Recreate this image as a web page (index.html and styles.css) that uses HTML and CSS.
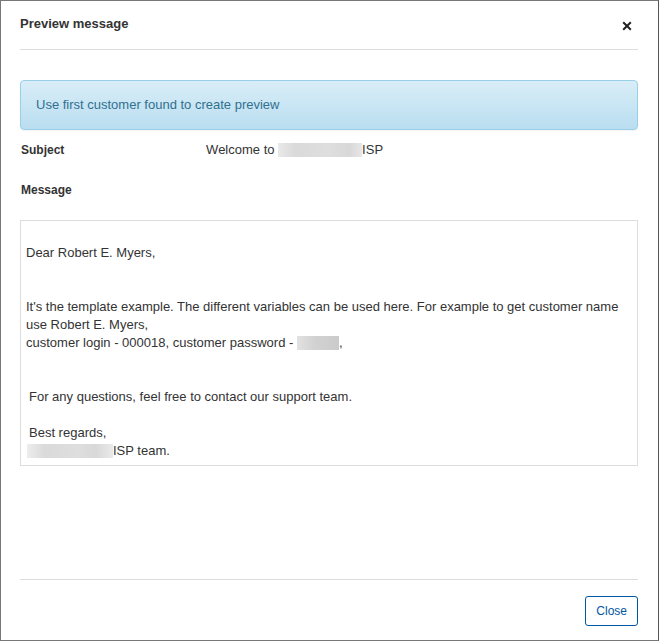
FILE: index.html
```html
<!DOCTYPE html>
<html lang="en">
<head>
  <meta charset="utf-8">
  <meta name="viewport" content="width=device-width, initial-scale=1">
  <title>Preview message</title>
  <link rel="stylesheet" href="styles.css">
</head>
<body>
  <section class="dialog" role="dialog" aria-labelledby="dialog-title">
    <header class="dialog-header">
      <h1 class="dialog-title" id="dialog-title">Preview message</h1>
      <button class="dismiss" type="button" aria-label="Dismiss">
        <svg class="dismiss-icon" viewBox="0 0 10 10" aria-hidden="true">
          <path d="M1.2 1.2 8.8 8.8M8.8 1.2 1.2 8.8"/>
        </svg>
      </button>
    </header>
    <main class="dialog-body">
      <p class="alert">Use first customer found to create preview</p>
      <dl class="fields">
        <dt class="label">Subject</dt>
        <dd class="value">Welcome to <span class="redacted redacted-name"></span>ISP</dd>
        <dt class="label">Message</dt>
      </dl>
      <div class="message">
        <p class="paragraph">Dear Robert E. Myers,</p>
        <div class="details">
          <p class="line">It's the template example. The different variables can be used here. For example to get customer name use Robert E. Myers,</p>
          <p class="line">customer login - 000018, customer password - <span class="redacted redacted-password"></span>,</p>
        </div>
        <p class="paragraph indented">For any questions, feel free to contact our support team.</p>
        <p class="line indented">Best regards,</p>
        <p class="line"><span class="redacted redacted-sender"></span>ISP team.</p>
      </div>
    </main>
    <footer class="dialog-footer">
      <button class="close" type="button">Close</button>
    </footer>
  </section>
</body>
</html>
```

FILE: styles.css
```css
* {
  box-sizing: border-box;
}

body {
  margin: 0;
  color: #333;
  background: #fff;
  font: 13px/18px "Liberation Sans", Arial, sans-serif;
}

.dialog {
  display: flex;
  flex-direction: column;
  min-height: 100vh;
  padding: 0 20px 0 19px;
  border: 1px solid #777;
  border-right-color: #555;
}

.dialog-header {
  display: flex;
  align-items: center;
  justify-content: space-between;
  height: 49px;
  border-bottom: 1px solid #ddd;
}

.dialog-title {
  margin: 0;
  padding-bottom: 2px;
  font-size: 13px;
  line-height: 18px;
}

.dismiss {
  display: flex;
  padding: 8px 6px 6px;
  border: 0;
  background: none;
}

.dismiss-icon {
  width: 10px;
  height: 10px;
  fill: none;
  stroke: #222;
  stroke-width: 2;
}

.dialog-body {
  flex: 1;
  padding-top: 30px;
}

.alert {
  margin: 0 0 10px;
  padding: 15px;
  border: 1px solid #9acfea;
  border-radius: 4px;
  color: #31708f;
  background: linear-gradient(#d9edf7, #b9def0);
  box-shadow: 0 1px 2px rgba(0, 0, 0, 0.05);
}

.fields {
  display: grid;
  grid-template-columns: 3fr 7fr;
  row-gap: 20px;
  margin: 0 0 20px;
  padding-left: 1px;
  line-height: 20px;
}

.label {
  font-size: 12px;
  font-weight: bold;
}

.value {
  margin: 0;
}

.message {
  padding: 23px 5px 5px;
  border: 1px solid #ddd;
}

.line,
.paragraph {
  margin: 0;
}

.paragraph {
  margin-bottom: 18px;
}

.details {
  margin: 36px 0;
}

.indented {
  padding-left: 3px;
}

.redacted {
  display: inline-block;
  height: 14px;
  vertical-align: -3px;
}

.redacted-name {
  width: 84px;
  background: linear-gradient(90deg, #e9e9e9, #dadada 20%, #dedede 60%, #d8d8d8 85%, #e6e6e6);
}

.redacted-password {
  width: 42px;
  background: linear-gradient(90deg, #e2e2e2, #d2d2d2 40%, #cbcbcb);
}

.redacted-sender {
  width: 86px;
  margin-left: 1px;
  background: linear-gradient(90deg, #ededed, #dadada 20%, #dedede 60%, #d8d8d8 80%, #eaeaea);
}

.dialog-footer {
  display: flex;
  justify-content: flex-end;
  padding: 16px 0 14px;
  border-top: 1px solid #ddd;
}

.close {
  padding: 5px 10px;
  border: 1px solid #0056a3;
  border-radius: 3px;
  color: #0056a3;
  background: #fff;
  font: 12px/18px "Liberation Sans", Arial, sans-serif;
}
```
